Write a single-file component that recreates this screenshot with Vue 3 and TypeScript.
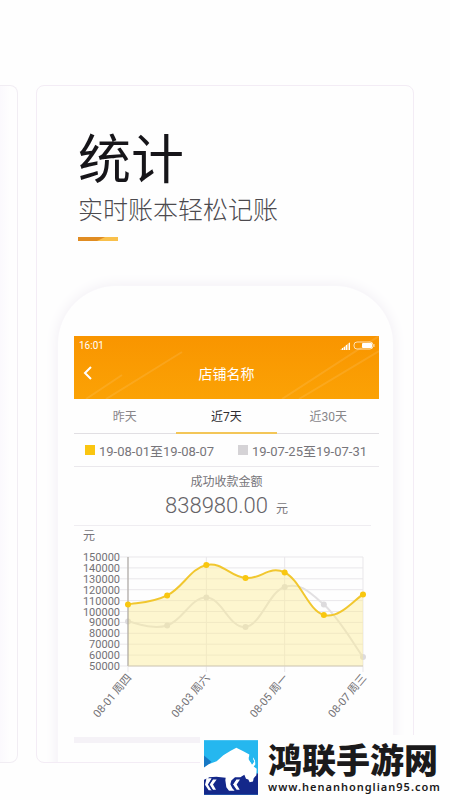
<script setup lang="ts">
import { ref } from 'vue'

interface Point {
  x: number
  y: number
}

const tabs: string[] = ['昨天', '近7天', '近30天']
const activeTab = ref<number>(1)

const current: number[] = [106400, 114700, 142700, 130700, 135800, 96800, 115600]
const previous: number[] = [90800, 87200, 112800, 85800, 122500, 106400, 58300]
const ticks: number[] = Array.from({ length: 11 }, (_, i) => 150000 - i * 10000)
const days: { index: number; label: string }[] = [
  { index: 0, label: '08-01 周四' },
  { index: 2, label: '08-03 周六' },
  { index: 4, label: '08-05 周一' },
  { index: 6, label: '08-07 周三' },
]

const plot = { left: 54, right: 289, top: 13, bottom: 122 }

const xAt = (i: number): number => plot.left + (i * (plot.right - plot.left)) / 6
const yAt = (v: number): number =>
  plot.bottom - ((v - 50000) / 100000) * (plot.bottom - plot.top)

const toPoints = (values: number[]): Point[] =>
  values.map((v, i) => ({ x: xAt(i), y: yAt(v) }))

/* Cubic line whose handles follow the neighbouring points. */
function smooth(points: Point[]): string {
  const k = 0.2
  let d = `M${points[0].x} ${points[0].y}`
  for (let i = 1; i < points.length; i++) {
    const a = points[i - 1]
    const b = points[i]
    const before = points[Math.max(i - 2, 0)]
    const after = points[Math.min(i + 1, points.length - 1)]
    d += ` C${a.x + (b.x - before.x) * k} ${a.y + (b.y - before.y) * k}`
    d += ` ${b.x - (after.x - a.x) * k} ${b.y - (after.y - a.y) * k} ${b.x} ${b.y}`
  }
  return d
}

const currentPoints = toPoints(current)
const previousPoints = toPoints(previous)
const currentLine = smooth(currentPoints)
const previousLine = smooth(previousPoints)
const currentArea = `${currentLine} L${plot.right} ${plot.bottom} L${plot.left} ${plot.bottom} Z`
</script>

<template>
  <main class="page">
    <div class="gallery">
      <div class="side-card"></div>
      <section class="card">
        <header class="intro">
          <h1>统计</h1>
          <p>实时账本轻松记账</p>
          <svg class="accent" viewBox="0 0 40 4" aria-hidden="true">
            <rect width="40" height="4" fill="#f9c04b" />
            <path d="M0 0H27L19 4H0Z" fill="#e08c22" />
          </svg>
        </header>

        <div class="phone">
          <div class="top">
            <svg class="streaks" viewBox="0 0 305 63" preserveAspectRatio="none" aria-hidden="true">
              <path d="M12 63L48 39M32 63L108 16M208 63L305 0M225 63L305 15" />
            </svg>
            <div class="status">
              <span>16:01</span>
              <svg viewBox="0 0 36 10" aria-hidden="true">
                <path d="M0 9L10 1V9Z" fill="#fff" fill-opacity=".5" />
                <path d="M2 9V7H3V9ZM4 9V6H5V9ZM6 9V4H7V9ZM9 9V2H10V9Z" fill="#fff" />
                <rect x="14" y="1" width="19" height="7" rx="3" fill="none" stroke="#fff" stroke-opacity=".7" />
                <rect x="22" y="2" width="10" height="5" rx="1" fill="#fff" />
                <path d="M34 3V6" stroke="#fff" stroke-opacity=".7" />
              </svg>
            </div>
            <div class="nav">
              <button type="button" class="back" aria-label="返回">
                <svg viewBox="0 0 10 16" aria-hidden="true"><path d="M8 2L2 8L8 14" /></svg>
              </button>
              <h2>店铺名称</h2>
            </div>
          </div>

          <nav class="tabs">
            <button
              v-for="(tab, i) in tabs"
              :key="tab"
              type="button"
              :class="{ active: i === activeTab }"
              @click="activeTab = i"
            >{{ tab }}</button>
          </nav>

          <div class="legend">
            <span><i class="now"></i>19-08-01至19-08-07</span>
            <span><i class="past"></i>19-07-25至19-07-31</span>
          </div>

          <div class="total">
            <p>成功收款金额</p>
            <div><strong>838980.00</strong><span>元</span></div>
          </div>

          <div class="chart">
            <p>元</p>
            <svg viewBox="0 0 305 180" role="img" aria-label="成功收款金额">
              <g class="grid">
                <path v-for="t in ticks" :key="t" :d="`M${plot.left - 8} ${yAt(t)}H${plot.right}`" />
                <path v-for="d in days" :key="d.index" :d="`M${xAt(d.index)} ${plot.top}V${plot.bottom + 6}`" />
              </g>
              <path class="past-line" :d="previousLine" />
              <circle v-for="(p, i) in previousPoints" :key="i" class="past-dot" :cx="p.x" :cy="p.y" r="3" />
              <path class="area" :d="currentArea" />
              <path class="axis" :d="`M${plot.left} ${plot.top}V${plot.bottom}`" />
              <path class="axis base" :d="`M${plot.left} ${plot.bottom}H${plot.right}`" />
              <path class="now-line" :d="currentLine" />
              <circle v-for="(p, i) in currentPoints" :key="i" class="now-dot" :cx="p.x" :cy="p.y" r="3" />
              <text v-for="t in ticks" :key="t" x="46" :y="yAt(t) + 4" text-anchor="end">{{ t }}</text>
              <text
                v-for="d in days"
                :key="d.index"
                text-anchor="end"
                :transform="`translate(${xAt(d.index) + 4} 134) rotate(-50)`"
              >{{ d.label }}</text>
            </svg>
          </div>
          <div class="divider"></div>
        </div>
      </section>
    </div>

    <aside class="brand">
      <svg class="logo" viewBox="0 0 162 164" aria-hidden="true">
        <rect width="162" height="164" fill="#25b7ef" />
        <path d="M0 46L22 65L0 90Z" fill="#1678c4" />
        <path d="M0 100H162V164H0Z" fill="#14288a" />
        <path
          d="M0 82L14 72L38 63L58 45L80 32L97 23L118 33L136 43L134 57L141 67L144 74L149 64L146 50L153 61L154 73L149 79L158 86L157 105L149 114L147 124L137 126L133 118L126 116L121 104L109 111L93 111L82 121L79 132L85 144L92 152H75L67 141L64 120L65 113L37 110L15 111L6 121L0 122Z"
          fill="#fff"
        />
        <path d="M148 36L143 47L134 52L138 64L145 72L151 64L145 55L149 49Z" fill="#25b7ef" />
        <path d="M0 119L8 115L4 132L0 136Z" fill="#14288a" />
        <path d="M8 114L3 134L14 150H24L14 133L23 114Z" fill="#fff" />
        <path d="M38 118L27 133L36 149H27L17 133L27 118ZM108 118L98 133L107 149H98L87 133L97 118Z" fill="#fff" />
        <path d="M25 116L14 133L24 150M95 116L84 133L94 150" fill="none" stroke="#14288a" stroke-width="4" />
      </svg>
      <div class="brand-text">
        <strong>鸿联手游网</strong>
        <span>www.henanhonglian95.com</span>
      </div>
    </aside>
  </main>
</template>

<style>
body {
  margin: 0;
  background: #fefefe;
}
</style>

<style scoped>
* {
  box-sizing: border-box;
}
h1, h2, p {
  margin: 0;
  font-weight: 400;
}
button {
  padding: 0;
  border: 0;
  background: none;
  font: inherit;
  color: inherit;
  cursor: pointer;
}
.page {
  position: relative;
  min-height: 100vh;
  padding: 85px 36px 37px 0;
  background: #fefefe;
  color: #77757a;
  font-family: Roboto, "Noto Sans CJK SC", sans-serif;
  overflow: hidden;
}
.gallery {
  display: flex;
  gap: 18px;
}
.side-card {
  width: 18px;
  border: 1px solid #f1edf3;
  border-left: 0;
  border-radius: 0 8px 8px 0;
  background: linear-gradient(to right, #fbf9fd, #fefefe 10px);
}
.card {
  flex: 1;
  height: 678px;
  padding: 0 20px 0 21px;
  border: 1px solid #f3ecf5;
  border-radius: 8px;
  overflow: hidden;
}
.intro {
  height: 200px;
  padding: 39px 0 0 20px;
}
h1 {
  color: #161519;
  font-size: 53px;
  line-height: 72px;
}
.intro p {
  color: #4c4a4e;
  font-size: 25px;
  line-height: 28px;
  font-weight: 300;
}
.accent {
  display: block;
  width: 40px;
  height: 4px;
  margin-top: 12px;
}
.phone {
  height: 520px;
  padding: 50px 14px 0 16px;
  border-radius: 58px 58px 0 0;
  background: #fefefe;
  box-shadow: 0 0 14px 1px #f2eff5;
}
.top {
  display: grid;
  background: linear-gradient(#f99500, #fba205);
  color: #fff;
}
.streaks {
  grid-area: 1 / 1 / 3 / 2;
  width: 100%;
  height: 63px;
  fill: none;
  stroke: #fff;
  stroke-width: 2;
  stroke-opacity: .1;
}
.status {
  grid-area: 1 / 1;
  display: flex;
  align-items: center;
  justify-content: space-between;
  height: 19px;
  padding: 0 3px 0 5px;
  font-size: 10px;
}
.status svg {
  width: 36px;
  height: 10px;
}
.nav {
  grid-area: 2 / 1;
  display: grid;
  grid-template-columns: 28px 1fr 28px;
  align-items: center;
  height: 44px;
  padding-bottom: 8px;
}
.back svg {
  display: block;
  width: 10px;
  height: 16px;
  margin-left: 9px;
  fill: none;
  stroke: #fff;
  stroke-width: 2;
}
.nav h2 {
  font-size: 14px;
  text-align: center;
}
.tabs {
  display: grid;
  grid-template-columns: repeat(3, 1fr);
  height: 35px;
  color: #88868a;
  font-size: 12px;
}
.tabs button {
  padding-bottom: 2px;
  border-bottom: 1px solid #e1dfe3;
}
.tabs button.active {
  padding-bottom: 1px;
  border-bottom: 2px solid #f3c658;
  color: #2f2d31;
}
.legend {
  display: flex;
  justify-content: space-between;
  align-items: center;
  height: 33px;
  padding: 0 12px 0 11px;
  border-bottom: 1px solid #eae8ec;
  font-size: 13px;
}
.legend span {
  display: flex;
  align-items: center;
  gap: 4px;
}
.legend i {
  width: 10px;
  height: 10px;
}
.now {
  background: #fac510;
}
.past {
  background: #d5d3d6;
}
.total {
  height: 59px;
  margin-right: 8px;
  padding-top: 5px;
  border-bottom: 1px solid #efedf1;
  text-align: center;
}
.total p {
  padding-left: 8px;
  font-size: 12px;
  line-height: 20px;
}
.total div {
  display: flex;
  align-items: baseline;
  justify-content: center;
  gap: 8px;
  padding-left: 8px;
  line-height: 28px;
}
.total strong {
  color: #656367;
  font-size: 22px;
  font-weight: 300;
}
.total span {
  font-size: 12px;
}
.chart p {
  height: 18px;
  padding-left: 9px;
  font-size: 12px;
  line-height: 20px;
}
.chart svg {
  display: block;
  width: 100%;
}
.chart text {
  fill: #737175;
  font-size: 11px;
}
.grid path {
  stroke: #e9e7ea;
}
.area {
  fill: #fdeb90;
  fill-opacity: .42;
}
.axis {
  stroke: #a19d96;
}
.base {
  stroke: #d1cbb5;
}
.now-line, .past-line {
  fill: none;
  stroke-width: 2;
}
.now-line {
  stroke: #f1c72f;
}
.past-line {
  stroke: #e2e0e2;
}
.now-dot {
  fill: #f9c70f;
}
.past-dot {
  fill: #dddbdd;
}
.divider {
  height: 6px;
  margin-top: 13px;
  background: #f5f2f7;
}
.brand {
  position: absolute;
  right: 0;
  bottom: 0;
  display: flex;
  gap: 10px;
  width: 250px;
  height: 65px;
  padding: 5px 4px 0;
  background: #fefefe;
}
.logo {
  flex: none;
  width: 54px;
  height: 55px;
}
.brand-text {
  display: flex;
  flex-direction: column;
  color: #1b1a1b;
  white-space: nowrap;
}
.brand-text strong {
  font-family: "Noto Sans CJK SC", sans-serif;
  font-size: 34px;
  font-weight: 900;
  line-height: 38px;
}
.brand-text span {
  font-family: "Noto Sans", sans-serif;
  font-size: 11px;
  font-weight: 600;
  line-height: 17px;
  letter-spacing: 1px;
}
</style>
